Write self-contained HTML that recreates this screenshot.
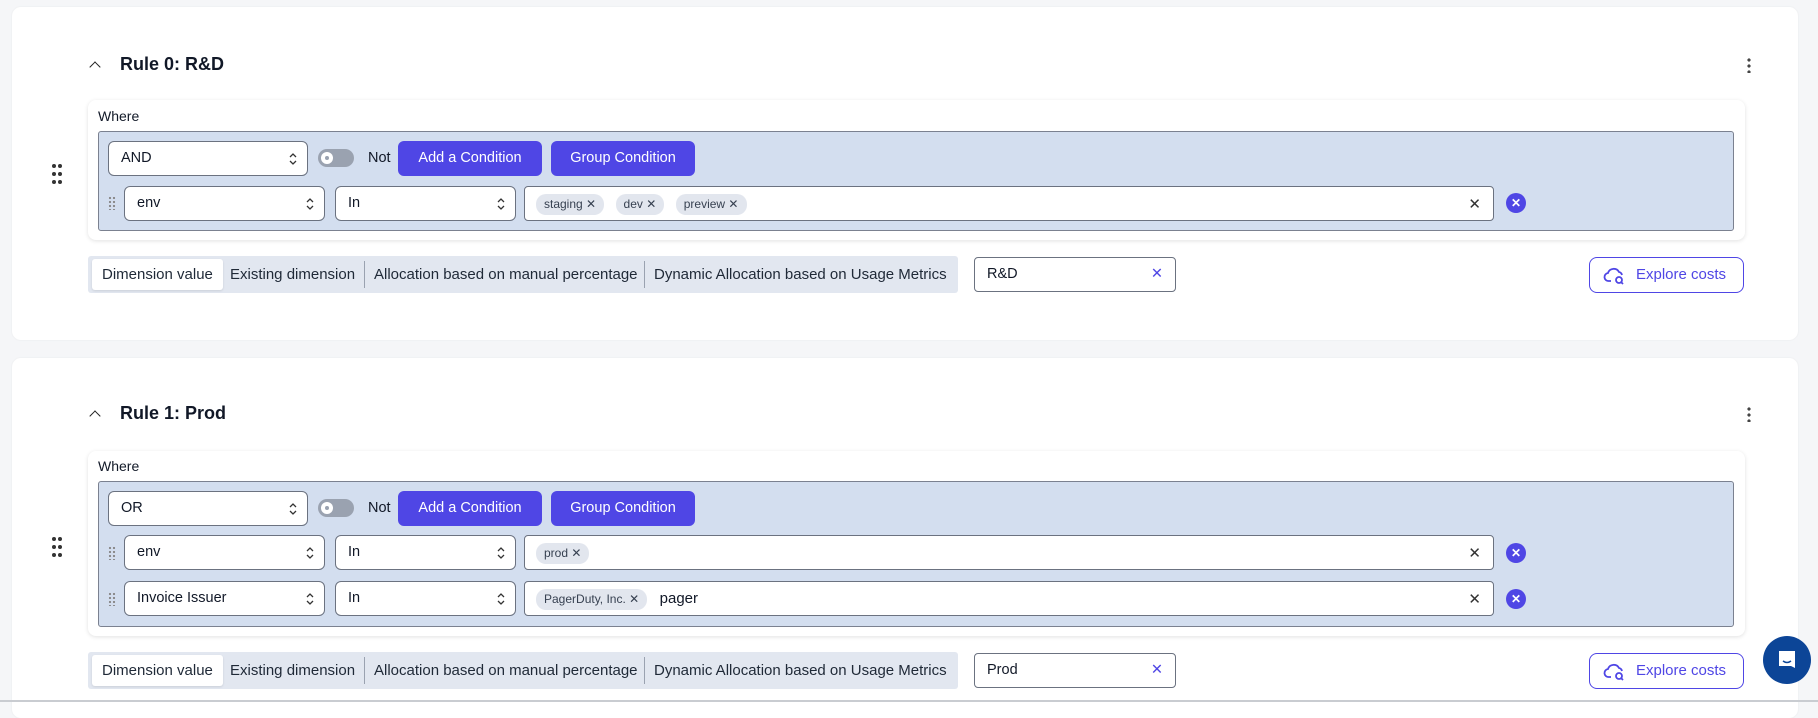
<!DOCTYPE html>
<html><head><style>
*{box-sizing:border-box;margin:0;padding:0}
body{width:1818px;height:702px;background:#f5f6f8;font-family:"Liberation Sans",sans-serif;color:#111827;position:relative;overflow:hidden}
.abs{position:absolute}
.card{position:absolute;left:12px;width:1786px;background:#fff;border-radius:9px;box-shadow:0 0 2px rgba(0,0,0,.06)}
.title{font-weight:bold;font-size:18px}
.where{position:absolute;left:88px;width:1657px;background:#fff;border-radius:8px;box-shadow:0 1px 4px rgba(0,0,0,.12)}
.grp{position:absolute;left:98px;width:1636px;background:#d3deef;border:1px solid #7b8190;border-radius:3px}
.sel{position:absolute;height:35px;background:#fff;border:1px solid #6b7280;border-radius:6px;font-size:14.5px;padding:0 12px;line-height:33px}
.chev{position:absolute;right:10px;top:10px}
.btn{position:absolute;height:35px;background:#4f46e5;color:#fff;border-radius:6px;font-size:14.5px;text-align:center;line-height:35px}
.tog{position:absolute;width:36px;height:18px;background:#9aa2b0;border-radius:9px}
.tog i{position:absolute;left:3px;top:3px;width:12px;height:12px;border-radius:50%;background:#fff}
.tog i:after{content:"";position:absolute;left:4px;top:4px;width:4px;height:4px;border-radius:50%;background:#9aa2b0}
.tags{position:absolute;height:35px;background:#fff;border:1px solid #6b7280;border-radius:4px}
.tag{display:inline-block;margin-top:7px;margin-left:11px;margin-right:-4px;background:#e2e6ee;border-radius:10px;font-size:12px;padding:0 8px;line-height:21px;height:21px;vertical-align:top;color:#374151}
.clr{position:absolute;right:12px;top:8px;font-size:15px;color:#333}
.xc{position:absolute;width:20px;height:20px;border-radius:50%;background:#4f46e5;color:#fff;font-size:12px;text-align:center;line-height:20px;font-weight:bold}
.dots{position:absolute;width:8px;height:14px;background-image:radial-gradient(circle,#888 1px,transparent 1.3px);background-size:4px 4px}
.tabs{position:absolute;left:88px;width:870px;height:37px;background:#e2e7f0;border-radius:3px;font-size:15px}
.tabs span{position:absolute;top:0;line-height:37px;color:#1f2937}
.tabs .on{top:3px;height:31px;line-height:31px;background:#fff;border-radius:3px;left:4px;padding:0 10px;box-shadow:0 1px 2px rgba(0,0,0,.1)}
.tabs .sep{position:absolute;top:5px;width:1px;height:27px;background:#9aa2b0}
.inp{position:absolute;left:974px;width:202px;height:35px;border:1px solid #6b7280;border-radius:4px;font-size:14.5px;line-height:33px;padding-left:12px}
.inp b{position:absolute;right:12px;top:0;color:#4f46e5;font-weight:normal}
.exp{position:absolute;left:1589px;width:155px;height:36px;border:1px solid #4f46e5;border-radius:8px;color:#4f46e5;font-size:15px;line-height:34px;padding-left:46px}
.exp svg{position:absolute;left:13px;top:8px}
.kebab{position:absolute;left:1747px;width:4px;height:16px;background-image:radial-gradient(circle,#444 1.5px,transparent 1.8px);background-size:4px 6px}
.caret{position:absolute;left:91px;width:8px;height:8px;border-left:1.6px solid #222;border-top:1.6px solid #222;transform:rotate(45deg)}
</style></head><body>

<!-- CARD 1 -->
<div class="card" style="top:7px;height:333px"></div>
<div class="caret" style="top:63px"></div>
<div class="abs title" style="left:120px;top:54px">Rule 0: R&amp;D</div>
<div class="kebab" style="top:57px"></div>
<svg class="abs" style="left:52px;top:164px" width="10" height="20"><g fill="#333"><circle cx="2" cy="2" r="2"/><circle cx="8" cy="2" r="2"/><circle cx="2" cy="10" r="2"/><circle cx="8" cy="10" r="2"/><circle cx="2" cy="18" r="2"/><circle cx="8" cy="18" r="2"/></g></svg>
<div class="where" style="top:100px;height:140px"></div>
<div class="abs" style="left:98px;top:108px;font-size:14px">Where</div>
<div class="grp" style="top:131px;height:100px"></div>
<div class="sel" style="left:108px;top:141px;width:200px">AND<svg class="chev" width="8" height="14" viewBox="0 0 8 14"><path d="M1 5l3-3 3 3M1 9l3 3 3-3" fill="none" stroke="#333" stroke-width="1.3"/></svg></div>
<div class="tog" style="left:318px;top:149px"><i></i></div>
<div class="abs" style="left:368px;top:150px;font-size:14.5px">Not</div>
<div class="btn" style="left:398px;top:141px;width:144px">Add a Condition</div>
<div class="btn" style="left:551px;top:141px;width:144px">Group Condition</div>
<div class="dots" style="left:108px;top:196px"></div>
<div class="sel" style="left:124px;top:186px;width:201px">env<svg class="chev" width="8" height="14" viewBox="0 0 8 14"><path d="M1 5l3-3 3 3M1 9l3 3 3-3" fill="none" stroke="#333" stroke-width="1.3"/></svg></div>
<div class="sel" style="left:335px;top:186px;width:181px">In<svg class="chev" width="8" height="14" viewBox="0 0 8 14"><path d="M1 5l3-3 3 3M1 9l3 3 3-3" fill="none" stroke="#333" stroke-width="1.3"/></svg></div>
<div class="tags" style="left:524px;top:186px;width:970px"><span class="tag">staging ✕</span> <span class="tag">dev ✕</span> <span class="tag">preview ✕</span><span class="clr">✕</span></div>
<div class="xc" style="left:1506px;top:193px">✕</div>
<div class="tabs" style="top:256px"><span class="on">Dimension value</span><span style="left:142px">Existing dimension</span><i class="sep" style="left:276px"></i><span style="left:286px">Allocation based on manual percentage</span><i class="sep" style="left:556px"></i><span style="left:566px">Dynamic Allocation based on Usage Metrics</span></div>
<div class="inp" style="top:257px">R&amp;D<b>✕</b></div>
<div class="exp" style="top:257px"><svg width="26" height="20" viewBox="0 0 26 20"><path d="M8 15H6a4 4 0 0 1-1-8 6 6 0 0 1 11-1 4 4 0 0 1 3 3" fill="none" stroke="#4f46e5" stroke-width="1.8"/><circle cx="16" cy="14" r="3" fill="none" stroke="#4f46e5" stroke-width="1.8"/><path d="M18 16l2 2" stroke="#4f46e5" stroke-width="1.8"/></svg>Explore costs</div>

<!-- CARD 2 -->
<div class="card" style="top:358px;height:360px"></div>
<div class="caret" style="top:412px"></div>
<div class="abs title" style="left:120px;top:403px">Rule 1: Prod</div>
<div class="kebab" style="top:406px"></div>
<svg class="abs" style="left:52px;top:537px" width="10" height="20"><g fill="#333"><circle cx="2" cy="2" r="2"/><circle cx="8" cy="2" r="2"/><circle cx="2" cy="10" r="2"/><circle cx="8" cy="10" r="2"/><circle cx="2" cy="18" r="2"/><circle cx="8" cy="18" r="2"/></g></svg>
<div class="where" style="top:451px;height:185px"></div>
<div class="abs" style="left:98px;top:458px;font-size:14px">Where</div>
<div class="grp" style="top:481px;height:146px"></div>
<div class="sel" style="left:108px;top:491px;width:200px">OR<svg class="chev" width="8" height="14" viewBox="0 0 8 14"><path d="M1 5l3-3 3 3M1 9l3 3 3-3" fill="none" stroke="#333" stroke-width="1.3"/></svg></div>
<div class="tog" style="left:318px;top:499px"><i></i></div>
<div class="abs" style="left:368px;top:500px;font-size:14.5px">Not</div>
<div class="btn" style="left:398px;top:491px;width:144px">Add a Condition</div>
<div class="btn" style="left:551px;top:491px;width:144px">Group Condition</div>
<div class="dots" style="left:108px;top:546px"></div>
<div class="sel" style="left:124px;top:535px;width:201px">env<svg class="chev" width="8" height="14" viewBox="0 0 8 14"><path d="M1 5l3-3 3 3M1 9l3 3 3-3" fill="none" stroke="#333" stroke-width="1.3"/></svg></div>
<div class="sel" style="left:335px;top:535px;width:181px">In<svg class="chev" width="8" height="14" viewBox="0 0 8 14"><path d="M1 5l3-3 3 3M1 9l3 3 3-3" fill="none" stroke="#333" stroke-width="1.3"/></svg></div>
<div class="tags" style="left:524px;top:535px;width:970px"><span class="tag">prod ✕</span><span class="clr">✕</span></div>
<div class="xc" style="left:1506px;top:543px">✕</div>
<div class="dots" style="left:108px;top:592px"></div>
<div class="sel" style="left:124px;top:581px;width:201px">Invoice Issuer<svg class="chev" width="8" height="14" viewBox="0 0 8 14"><path d="M1 5l3-3 3 3M1 9l3 3 3-3" fill="none" stroke="#333" stroke-width="1.3"/></svg></div>
<div class="sel" style="left:335px;top:581px;width:181px">In<svg class="chev" width="8" height="14" viewBox="0 0 8 14"><path d="M1 5l3-3 3 3M1 9l3 3 3-3" fill="none" stroke="#333" stroke-width="1.3"/></svg></div>
<div class="tags" style="left:524px;top:581px;width:970px"><span class="tag">PagerDuty, Inc. ✕</span> <span style="font-size:15px;margin-left:12px;line-height:33px;vertical-align:top">pager</span><span class="clr">✕</span></div>
<div class="xc" style="left:1506px;top:589px">✕</div>
<div class="tabs" style="top:652px"><span class="on">Dimension value</span><span style="left:142px">Existing dimension</span><i class="sep" style="left:276px"></i><span style="left:286px">Allocation based on manual percentage</span><i class="sep" style="left:556px"></i><span style="left:566px">Dynamic Allocation based on Usage Metrics</span></div>
<div class="inp" style="top:653px">Prod<b>✕</b></div>
<div class="exp" style="top:653px"><svg width="26" height="20" viewBox="0 0 26 20"><path d="M8 15H6a4 4 0 0 1-1-8 6 6 0 0 1 11-1 4 4 0 0 1 3 3" fill="none" stroke="#4f46e5" stroke-width="1.8"/><circle cx="16" cy="14" r="3" fill="none" stroke="#4f46e5" stroke-width="1.8"/><path d="M18 16l2 2" stroke="#4f46e5" stroke-width="1.8"/></svg>Explore costs</div>
<div class="abs" style="left:0;top:700px;width:1818px;height:2px;background:#c9ccd1"></div>
<div class="abs" style="left:1763px;top:636px;width:48px;height:48px;border-radius:50%;background:#0c4597"><svg style="position:absolute;left:14px;top:13px" width="20" height="22" viewBox="0 0 20 22"><path d="M2 2h16v17l-4-2H2z" fill="#fff"/><path d="M6 12q4 3 8 0" fill="none" stroke="#0c4597" stroke-width="1.5"/></svg></div>
</body></html>
